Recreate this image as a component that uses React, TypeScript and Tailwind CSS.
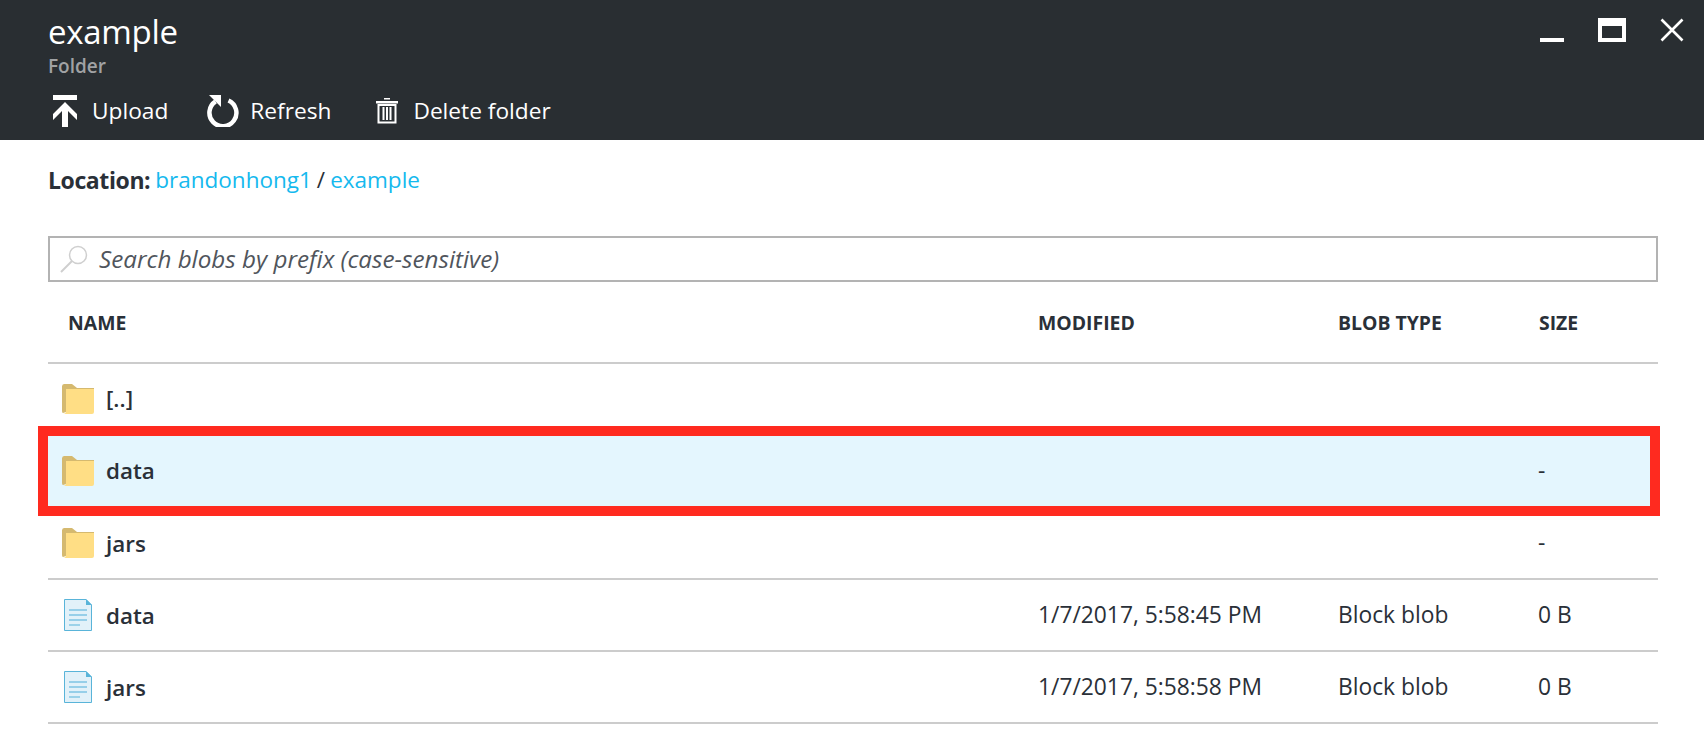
import React from "react";

function FolderIcon() {
  return (
    <svg width="32" height="30" viewBox="0 0 32 30" className="shrink-0">
      <path d="M0 2.5 Q0 0 2 0 H10 L15 4 H32 V8 H0 Z" fill="#d5b96f" />
      <path d="M0 2 H4 V28 L1 29 Q0 29 0 27 Z" fill="#d5b96f" />
      <path d="M4 5 H32 V28 Q32 30 30 30 H1 Q4 30 4 27 Z" fill="#ffde85" />
    </svg>
  );
}

function FileIcon() {
  return (
    <svg width="28" height="32" viewBox="0 0 28 32" className="shrink-0">
      <path d="M.5.5 H22 L27.5 6 V31.5 H.5 Z" fill="#e2f1f9" stroke="#59b4d9" />
      <path d="M22 0 L28 6 H22 Z" fill="#59b4d9" />
      <path d="M5 11 H23 M5 16 H23 M5 21 H23" stroke="#7fc4e3" strokeWidth="1.4" />
      <path d="M5 26 H16" stroke="#7fc4e3" strokeWidth="1.4" />
    </svg>
  );
}

function Action({ icon, label }: { icon: React.ReactNode; label: string }) {
  return (
    <div className="flex items-center">
      {icon}
      <span className="text-[22.7px] leading-[32px] font-medium text-white">{label}</span>
    </div>
  );
}

type Row = { kind: "folder" | "file"; name: string; modified?: string; type?: string; size?: string; selected?: boolean; line?: boolean };

const rows: Row[] = [
  { kind: "folder", name: "[..]" },
  { kind: "folder", name: "data", size: "-", selected: true },
  { kind: "folder", name: "jars", size: "-", line: true },
  { kind: "file", name: "data", modified: "1/7/2017, 5:58:45 PM", type: "Block blob", size: "0 B", line: true },
  { kind: "file", name: "jars", modified: "1/7/2017, 5:58:58 PM", type: "Block blob", size: "0 B", line: true },
];

export default function App() {
  return (
    <div className="relative h-[746px] w-[1704px] overflow-hidden bg-white font-['Open_Sans',sans-serif] text-[#2a3038]">
      <header className="flex h-[140px] justify-between bg-[#292e32] pl-[48px] pr-[20px]">
        <div>
          <h1 className="mt-[10px] text-[33px] leading-[44px] font-normal tracking-[-0.3px] text-white">example</h1>
          <div className="text-[19px] leading-[24px] font-semibold text-[#a0a2a4]">Folder</div>
          <div className="mt-[17px] flex h-[32px]">
            <Action
              label="Upload"
              icon={
                <svg width="24" height="32" viewBox="0 0 24 32" className="mr-[15px] ml-[5px]">
                  <path d="M0 0 H24 V5 H0 Z M12 7 L24 19 V25 L15 16 V32 H9 V16 L0 25 V19 Z" fill="#fff" />
                </svg>
              }
            />
            <div className="ml-[39px]">
              <Action
                label="Refresh"
                icon={
                  <svg width="32" height="32" viewBox="0 0 32 32" className="mr-[11px]">
                    <path d="M8.5 6.5 A13.5 13.5 0 1 0 21.5 5.5" fill="none" stroke="#fff" strokeWidth="4.5" />
                    <path d="M2 0 H14 V12 Z" fill="#fff" />
                  </svg>
                }
              />
            </div>
            <div className="ml-[45px]">
              <Action
                label="Delete folder"
                icon={
                  <svg width="22" height="26" viewBox="0 0 22 26" className="mr-[15px]">
                    <path d="M8 0 H14 V1.5 H8 Z M0 3 H22 V5.5 H0 Z" fill="#fff" />
                    <path d="M2.5 7 H19.5 V24.5 H2.5 Z" fill="none" stroke="#fff" strokeWidth="2" />
                    <path d="M7.5 9 V22 M11 9 V22 M14.5 9 V22" stroke="#fff" strokeWidth="2" />
                  </svg>
                }
              />
            </div>
          </div>
        </div>
        <div className="mt-[18px] flex items-start gap-[34px]">
          <div className="mt-[20px] h-[4px] w-[24px] bg-white" />
          <div className="h-[24px] w-[28px] border-x-[4px] border-t-[8px] border-b-[4px] border-white" />
          <svg width="24" height="24" viewBox="0 0 24 24">
            <path d="M1.5 1.5 L22.5 22.5 M22.5 1.5 L1.5 22.5" stroke="#fff" strokeWidth="2.6" />
          </svg>
        </div>
      </header>

      <main className="pl-[48px] pr-[46px]">
        <div className="flex h-[80px] items-center text-[22.5px]">
          <span className="text-[23px] font-bold tracking-[-0.4px]">Location:</span>
          <span className="ml-[5px] text-[#15b9ee]">brandonhong1</span>
          <span className="mx-[5px]">/</span>
          <span className="text-[#15b9ee]">example</span>
        </div>
        <div className="mt-[16px] flex h-[46px] items-center border-2 border-[#b3b3b3] pl-[10px]">
          <svg width="28" height="28" viewBox="0 0 28 28" className="mr-[11px]">
            <circle cx="18" cy="10" r="8.5" fill="none" stroke="#cfcfcf" strokeWidth="1.5" />
            <path d="M12 16 L1 27" stroke="#cfcfcf" strokeWidth="2" />
          </svg>
          <span className="text-[24.2px] text-[#50555c] italic">Search blobs by prefix (case-sensitive)</span>
        </div>
        <div className="grid h-[82px] grid-cols-[970px_300px_201px_1fr] items-center border-b-2 border-[#cccccc] pt-[2px] pl-[20px] text-[19.4px] font-bold">
          <span>NAME</span>
          <span>MODIFIED</span>
          <span>BLOB TYPE</span>
          <span>SIZE</span>
        </div>
        {rows.map((r, i) => (
          <div
            key={i}
            className={`grid h-[72px] grid-cols-[970px_300px_200px_1fr] items-center pl-[14px] text-[22.8px] ${r.line ? "border-b-2 border-[#cccccc] pt-[1px]" : "pb-[2px]"} ${r.selected ? "bg-[#e4f6fe]" : ""}`}
          >
            <div className="flex items-center font-semibold">
              <span className="flex w-[44px] justify-start">{r.kind === "folder" ? <FolderIcon /> : <span className="ml-[2px]"><FileIcon /></span>}</span>
              <span className="text-[22.4px]">{r.name}</span>
            </div>
            <span className="pl-[6px]">{r.modified}</span>
            <span className="pl-[6px]">{r.type}</span>
            <span className="pl-[6px]">{r.size}</span>
          </div>
        ))}
      </main>
      <div className="pointer-events-none absolute top-[426px] left-[38px] h-[90px] w-[1622px] border-[10px] border-[#ff2a1f]" />
    </div>
  );
}
